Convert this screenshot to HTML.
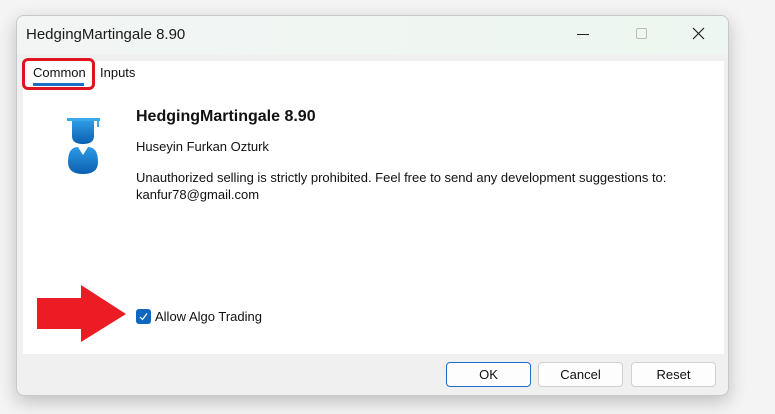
<!DOCTYPE html>
<html><head><style>
*{margin:0;padding:0;box-sizing:border-box}
body{width:775px;height:414px;background:#f4f4f4;font-family:"Liberation Sans",sans-serif;position:relative;overflow:hidden}
.win{position:absolute;left:16px;top:15px;width:713px;height:381px;background:#f0f0f0;border:1px solid #c8c8c8;border-radius:8px;box-shadow:0 6px 18px rgba(0,0,0,.22);overflow:hidden}
.title{position:absolute;left:0;top:0;width:100%;height:38px;background:linear-gradient(90deg,#f2f5f4,#edf6f0)}
.title span{position:absolute;left:9px;top:10px;font-size:15px;color:#1a1a1a}
.panel{position:absolute;left:6px;top:45px;width:701px;height:293px;background:#fff}
.t{position:absolute;font-size:13px;color:#111}
.btn{position:absolute;top:346px;width:85px;height:25px;background:#fdfdfd;border:1px solid #d0d0d0;border-radius:4px;font-size:13px;text-align:center;line-height:23px;color:#111}
</style></head><body>
<div class="win">
 <div class="title"><span>HedgingMartingale 8.90</span>
  <div style="position:absolute;left:560px;top:18px;width:12px;height:1px;background:#222"></div>
  <div style="position:absolute;left:619px;top:12px;width:11px;height:11px;border:1px solid #bbb;border-radius:2px"></div>
  <svg style="position:absolute;left:675px;top:11px" width="13" height="13"><path d="M1 1L12 12M12 1L1 12" stroke="#222" stroke-width="1.2"/></svg>
 </div>
 <div class="panel">
  <div class="t" style="left:10px;top:4px">Common</div>
  <div style="position:absolute;left:10px;top:22px;width:51px;height:3px;background:#1a6fc4"></div>
  <div style="position:absolute;left:-1px;top:-3px;width:73px;height:32px;border:3px solid #e0141e;border-radius:6px"></div>
  <div class="t" style="left:77px;top:4px">Inputs</div>
  <svg style="position:absolute;left:44px;top:57px" width="36" height="58">
   <defs><linearGradient id="g" x1="0" y1="0" x2="0" y2="1"><stop offset="0" stop-color="#2d9be6"/><stop offset="1" stop-color="#0b5fb0"/></linearGradient></defs>
   <rect x="0" y="0" width="33" height="3" fill="#39a8e8"/>
   <rect x="30" y="2" width="2" height="7" fill="#39a8e8"/>
   <path d="M5 3H27V18Q27 26 16 26Q5 26 5 18Z" fill="url(#g)"/>
   <path d="M1 44Q1 29 11 29L16 37L21 29Q31 29 31 44Q31 56 16 56Q1 56 1 44Z" fill="url(#g)"/>
  </svg>
  <div class="t" style="left:113px;top:47px;font-size:16px;font-weight:bold">HedgingMartingale 8.90</div>
  <div class="t" style="left:113px;top:78px">Huseyin Furkan Ozturk</div>
  <div class="t" style="left:113px;top:108px;line-height:17px">Unauthorized selling is strictly prohibited. Feel free to send any development suggestions to:<br>kanfur78@gmail.com</div>
  <svg style="position:absolute;left:14px;top:224px" width="90" height="58"><path d="M0 13H44V0L89 29L44 57V44H0Z" fill="#ec1c24"/></svg>
  <div style="position:absolute;left:113px;top:248px;width:15px;height:15px;background:#0f67c0;border-radius:3px"></div>
  <svg style="position:absolute;left:113px;top:248px" width="15" height="15"><path d="M4 8L6.5 10.5L11 4.5" stroke="#fff" stroke-width="1.2" fill="none"/></svg>
  <div class="t" style="left:132px;top:248px">Allow Algo Trading</div>
 </div>
 <div class="btn" style="left:429px;border-color:#1a6fc4">OK</div>
 <div class="btn" style="left:521px">Cancel</div>
 <div class="btn" style="left:614px">Reset</div>
</div>
</body></html>
